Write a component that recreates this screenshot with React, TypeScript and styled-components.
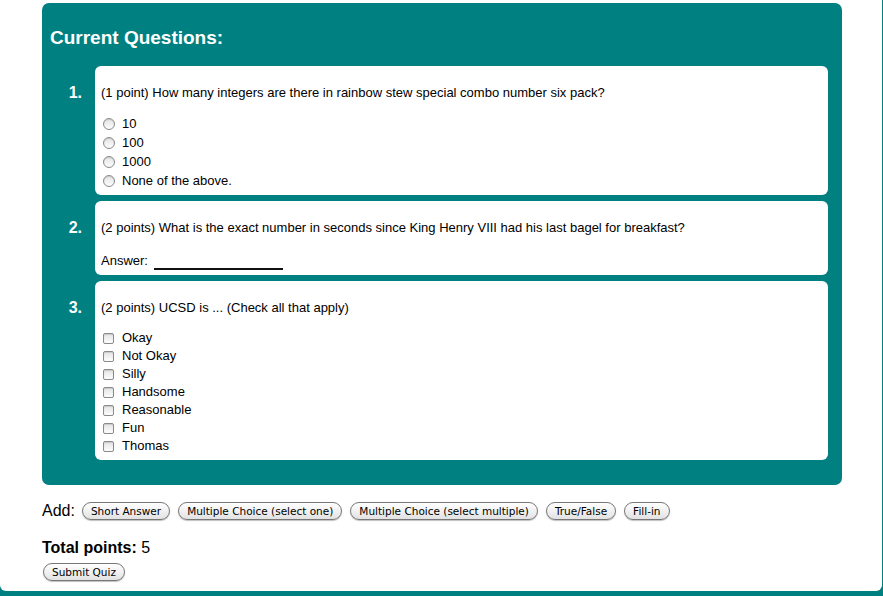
import React from 'react';
import styled, { createGlobalStyle, css } from 'styled-components';

const GlobalStyle = createGlobalStyle`
  html, body {
    margin: 0;
    padding: 0;
    background: #008080;
  }
  body {
    font-family: 'Liberation Sans', Arial, Helvetica, sans-serif;
    color: #000;
  }
`;

const Page = styled.div`
  width: 882px;
  background: #fff;
  border-radius: 0 0 6px 6px;
  padding: 3px 0 11px 42px;
  box-sizing: border-box;
`;

const Panel = styled.div`
  width: 800px;
  box-sizing: border-box;
  background: #008080;
  border-radius: 7px;
  padding: 24px 14px 25px 0;
`;

const Title = styled.h2`
  margin: 0 0 17px 8px;
  font-size: 19px;
  line-height: 22px;
  font-weight: bold;
  color: #fff;
`;

const QuestionList = styled.ol`
  list-style: none;
  margin: 0;
  padding: 0;
  display: flex;
  flex-direction: column;
  gap: 6px;
`;

const QuestionItem = styled.li`
  display: grid;
  grid-template-columns: 53px 1fr;
`;

const Number = styled.div`
  padding: 19px 13px 0 0;
  text-align: right;
  font-size: 16px;
  line-height: 16px;
  font-weight: bold;
  color: #fff;
`;

const Card = styled.div<{ $bottom: number }>`
  background: #fff;
  border-radius: 6px;
  padding: 19px 6px ${(p) => p.$bottom}px 6px;
  font-size: 13px;
  line-height: 16px;
`;

const Prompt = styled.div``;

const Options = styled.ul<{ $top: number }>`
  list-style: none;
  margin: ${(p) => p.$top}px 0 0 0;
  padding: 0 0 0 2px;
`;

const Option = styled.li<{ $height: number }>`
  display: flex;
  align-items: center;
  gap: 7px;
  height: ${(p) => p.$height}px;
`;

const markBase = css`
  display: inline-block;
  box-sizing: border-box;
  border: 1px solid #8a8a8a;
  background: linear-gradient(#e4e4e4, #fdfdfd);
  box-shadow: inset 0 1px 1px rgba(0, 0, 0, 0.12);
  flex: none;
`;

const Radio = styled.span`
  ${markBase}
  width: 12px;
  height: 12px;
  border-radius: 50%;
`;

const Checkbox = styled.span`
  ${markBase}
  width: 11px;
  height: 11px;
  border-radius: 2px;
  margin-right: 1px;
`;

const AnswerRow = styled.div`
  margin-top: 16px;
  line-height: 18px;
`;

const Blank = styled.span`
  display: inline-block;
  width: 129px;
  height: 12px;
  margin-left: 6px;
  margin-bottom: -5px;
  border-bottom: 2px solid #111;
`;

const AddRow = styled.div`
  display: flex;
  align-items: center;
  gap: 8px;
  margin-top: 17px;
  height: 18px;
  font-size: 16px;
`;

const AddLabel = styled.span`
  margin-right: -1px;
`;

const PillButton = styled.button`
  height: 18px;
  padding: 0 8px;
  border: 1px solid #777;
  border-radius: 9px;
  background: linear-gradient(#ffffff 0%, #f1f1f1 50%, #e2e2e2 100%);
  box-shadow: 0 1px 1px rgba(0, 0, 0, 0.25);
  font-family: 'DejaVu Sans', 'Lucida Grande', sans-serif;
  font-size: 10.5px;
  line-height: 16px;
  color: #000;
  cursor: pointer;
`;

const Total = styled.div`
  margin-top: 19px;
  font-size: 16px;
  line-height: 18px;
`;

const SubmitRow = styled.div`
  margin-top: 5px;
  height: 18px;
  padding-left: 1px;
`;

const radioOptions = ['10', '100', '1000', 'None of the above.'];
const checkOptions = ['Okay', 'Not Okay', 'Silly', 'Handsome', 'Reasonable', 'Fun', 'Thomas'];
const addTypes = [
  'Short Answer',
  'Multiple Choice (select one)',
  'Multiple Choice (select multiple)',
  'True/False',
  'Fill-in',
];

export default function App() {
  return (
    <>
      <GlobalStyle />
      <Page>
        <Panel>
          <Title>Current Questions:</Title>
          <QuestionList>
            <QuestionItem>
              <Number>1.</Number>
              <Card $bottom={5}>
                <Prompt>(1 point) How many integers are there in rainbow stew special combo number six pack?</Prompt>
                <Options $top={13}>
                  {radioOptions.map((o) => (
                    <Option key={o} $height={19}>
                      <Radio />
                      {o}
                    </Option>
                  ))}
                </Options>
              </Card>
            </QuestionItem>
            <QuestionItem>
              <Number>2.</Number>
              <Card $bottom={5}>
                <Prompt>(2 points) What is the exact number in seconds since King Henry VIII had his last bagel for breakfast?</Prompt>
                <AnswerRow>
                  Answer:
                  <Blank />
                </AnswerRow>
              </Card>
            </QuestionItem>
            <QuestionItem>
              <Number>3.</Number>
              <Card $bottom={5}>
                <Prompt>(2 points) UCSD is ... (Check all that apply)</Prompt>
                <Options $top={13}>
                  {checkOptions.map((o) => (
                    <Option key={o} $height={18}>
                      <Checkbox />
                      {o}
                    </Option>
                  ))}
                </Options>
              </Card>
            </QuestionItem>
          </QuestionList>
        </Panel>
        <AddRow>
          <AddLabel>Add:</AddLabel>
          {addTypes.map((t) => (
            <PillButton key={t}>{t}</PillButton>
          ))}
        </AddRow>
        <Total>
          <b>Total points:</b> 5
        </Total>
        <SubmitRow>
          <PillButton>Submit Quiz</PillButton>
        </SubmitRow>
      </Page>
    </>
  );
}
